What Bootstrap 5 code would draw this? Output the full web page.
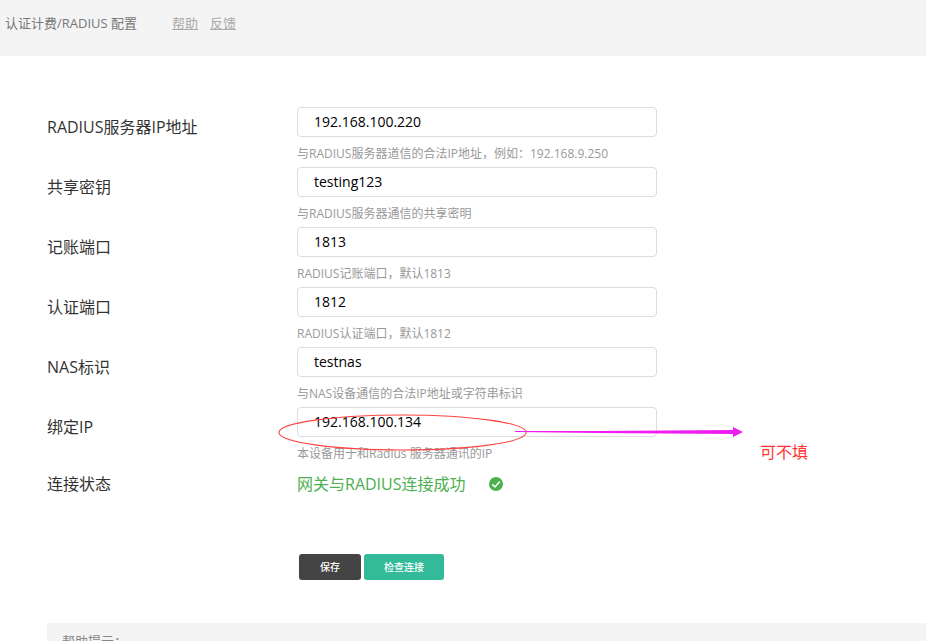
<!DOCTYPE html>
<html lang="zh-CN">
<head>
<meta charset="utf-8">
<meta name="viewport" content="width=device-width, initial-scale=1">
<title>认证计费/RADIUS 配置</title>
<link href="https://cdn.jsdelivr.net/npm/bootstrap@5.3.0/dist/css/bootstrap.min.css" rel="stylesheet">
<style>
  body { font-family: "Open Sans", "Noto Sans CJK SC", sans-serif; font-size: 16px; color: #333; background: #fff; }
  .topbar { background: #f4f4f4; font-size: 13px; line-height: 20px; color: #777; padding: 13px 5px 23px; }
  .topbar-title { margin-right: 35px; }
  .topbar a { color: #aaa; margin-right: 12px; }
  .settings { padding: 51px 0 0 47px; }
  .setting-row { min-height: 60px; }
  .setting-label { flex: 0 0 250px; line-height: 24px; padding-top: 8px; }
  .setting-field { flex: 0 1 360px; min-width: 0; }
  .setting-field .form-control { height: 30px; padding: 0 16px 2px; font-size: 14px; line-height: 26px; color: #000; border: 1px solid #ddd; border-radius: 4px; }
  .hint { font-size: 12px; line-height: 18px; padding-top: 8px; color: #999; white-space: nowrap; }
  .state-row { line-height: 24px; padding-top: 5px; }
  .state-label { flex: 0 0 250px; }
  .state-ok { color: #4caf50; gap: 19px; }
  .actions { gap: 3px; padding: 58px 0 0 252px; }
  .actions .btn { height: 26px; padding: 0 20px; font-size: 10px; line-height: 26px; font-weight: 500; color: #fff; border: 0; border-radius: 3px; }
  .actions .action-save { background: #444; padding: 0 21px; }
  .actions .action-test { background: #3b9; }
  .tips { background: #f4f4f4; color: #888; font-size: 13px; line-height: 20px; margin-top: 43px; padding: 8px 15px; }
  .callout-mark { position: absolute; left: -20px; top: 6px; pointer-events: none; }
  .callout-text { position: absolute; left: 463px; top: 33px; color: #ff3333; line-height: 24px; white-space: nowrap; }
</style>
<script src="https://cdn.jsdelivr.net/npm/bootstrap@5.3.0/dist/js/bootstrap.bundle.min.js"></script>
</head>
<body class="vh-100 overflow-hidden">
<header class="topbar d-flex">
  <span class="topbar-title">认证计费/RADIUS 配置</span>
  <a href="#help">帮助</a>
  <a href="#feedback">反馈</a>
</header>
<main class="settings">
  <form>
    <div class="setting-row d-flex">
      <label class="setting-label" for="server">RADIUS服务器IP地址</label>
      <div class="setting-field"><input class="form-control" id="server" type="text" value="192.168.100.220"><div class="hint">与RADIUS服务器道信的合法IP地址，例如：192.168.9.250</div></div>
    </div>
    <div class="setting-row d-flex">
      <label class="setting-label" for="secret">共享密钥</label>
      <div class="setting-field"><input class="form-control" id="secret" type="text" value="testing123"><div class="hint">与RADIUS服务器通信的共享密明</div></div>
    </div>
    <div class="setting-row d-flex">
      <label class="setting-label" for="acct">记账端口</label>
      <div class="setting-field"><input class="form-control" id="acct" type="text" value="1813"><div class="hint">RADIUS记账端口，默认1813</div></div>
    </div>
    <div class="setting-row d-flex">
      <label class="setting-label" for="auth">认证端口</label>
      <div class="setting-field"><input class="form-control" id="auth" type="text" value="1812"><div class="hint">RADIUS认证端口，默认1812</div></div>
    </div>
    <div class="setting-row d-flex">
      <label class="setting-label" for="nas">NAS标识</label>
      <div class="setting-field"><input class="form-control" id="nas" type="text" value="testnas"><div class="hint">与NAS设备通信的合法IP地址或字符串标识</div></div>
    </div>
    <div class="setting-row d-flex">
      <label class="setting-label" for="bind">绑定IP</label>
      <div class="setting-field position-relative">
        <input class="form-control" id="bind" type="text" value="192.168.100.134"><div class="hint">本设备用于和Radius 服务器通讯的IP</div>
        <svg class="callout-mark" width="470" height="40" viewBox="0 0 470 40" aria-hidden="true">
          <ellipse cx="125.500" cy="19.500" rx="123.500" ry="17.500" fill="none" stroke="#f44" stroke-width="1.100"/>
          <path d="M238 18H320L456 17V14L466 19L456 24V21L320 20L238 19Z" fill="#f01cf0"/>
        </svg>
        <span class="callout-text">可不填</span>
      </div>
    </div>
    <div class="state-row d-flex">
      <span class="state-label">连接状态</span>
      <span class="state-ok d-flex align-items-center">网关与RADIUS连接成功
        <svg width="20" height="16" viewBox="0 0 20 16" aria-hidden="true"><circle cx="11" cy="8" r="7" fill="#4caf50"/><path d="M7.300 8.400 10 11l4.700-5.500" fill="none" stroke="#fff" stroke-width="1.500"/></svg>
      </span>
    </div>
    <div class="actions d-flex">
      <button class="btn action-save" type="submit">保存</button>
      <button class="btn action-test" type="button">检查连接</button>
    </div>
  </form>
  <section class="tips">帮助提示：</section>
</main>
</body>
</html>
